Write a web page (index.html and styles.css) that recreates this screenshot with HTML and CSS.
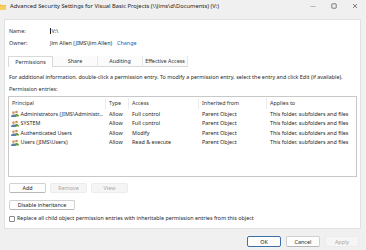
FILE: index.html
```html
<!DOCTYPE html>
<html lang="en">
<head>
    <meta charset="UTF-8">
    <meta name="viewport" content="width=device-width, initial-scale=1.0">
    <title>Advanced Security Settings</title>
    <link rel="stylesheet" href="styles.css">
</head>
<body>
    <div class="window">
        <header class="titlebar">
            <svg class="folder-icon" width="6" height="7" viewBox="4 0 6 7">
                <path d="M0 1h4l1 1h5v5H0z" fill="#e8b53a"/>
                <path d="M0 2.5h10V7H0z" fill="#f7cf5c"/>
            </svg>
            <span class="title">Advanced Security Settings for Visual Basic Projects (\\Jims\d\Documents) (V:)</span>
            <div class="controls">
                <svg width="6" height="6" viewBox="0 0 6 6"><path d="M0.5 3.5h5" stroke="#888" stroke-width="0.6"/></svg>
                <svg width="6" height="6" viewBox="0 0 6 6"><rect x="0.8" y="0.8" width="4.4" height="4.4" rx="0.6" fill="none" stroke="#333" stroke-width="0.6"/></svg>
                <svg width="6" height="6" viewBox="0 0 6 6"><path d="M1 1l4 4M5 1l-4 4" stroke="#333" stroke-width="0.6"/></svg>
            </div>
        </header>

        <main class="panel">
            <div class="info">
                <span class="label">Name:</span>
                <span class="value"><span class="caret"></span>V:\</span>
                <span class="label">Owner:</span>
                <span class="value">Jim Allen (JIMS\Jim Allen) <a class="link" href="#">Change</a></span>
            </div>

            <nav class="tabs">
                <span class="tab active">Permissions</span>
                <span class="tab">Share</span>
                <span class="tab">Auditing</span>
                <span class="tab">Effective Access</span>
            </nav>

            <section class="page">
                <p class="hint">For additional information, double-click a permission entry. To modify a permission entry, select the entry and click Edit (if available).</p>
                <p class="caption">Permission entries:</p>

                <div class="listbox">
                    <div class="list-row list-head">
                        <span>Principal</span>
                        <span>Type</span>
                        <span>Access</span>
                        <span>Inherited from</span>
                        <span>Applies to</span>
                    </div>
                    <div class="list-row">
                        <span class="principal"><svg class="user-icon" viewBox="0 0 16 14"><circle cx="11" cy="4" r="2.7" fill="#c9935e"/><path d="M6 13q0-5 5-5t5 5z" fill="#5f9a3a"/><circle cx="5" cy="5.5" r="2.8" fill="#d8a46c"/><path d="M0 14q0-5 5-5t5 5z" fill="#5b7fa8"/></svg>Administrators (JIMS\Administr...</span>
                        <span>Allow</span>
                        <span>Full control</span>
                        <span>Parent Object</span>
                        <span>This folder, subfolders and files</span>
                    </div>
                    <div class="list-row">
                        <span class="principal"><svg class="user-icon" viewBox="0 0 16 14"><circle cx="11" cy="4" r="2.7" fill="#c9935e"/><path d="M6 13q0-5 5-5t5 5z" fill="#5f9a3a"/><circle cx="5" cy="5.5" r="2.8" fill="#d8a46c"/><path d="M0 14q0-5 5-5t5 5z" fill="#5b7fa8"/></svg>SYSTEM</span>
                        <span>Allow</span>
                        <span>Full control</span>
                        <span>Parent Object</span>
                        <span>This folder, subfolders and files</span>
                    </div>
                    <div class="list-row">
                        <span class="principal"><svg class="user-icon" viewBox="0 0 16 14"><circle cx="11" cy="4" r="2.7" fill="#c9935e"/><path d="M6 13q0-5 5-5t5 5z" fill="#5f9a3a"/><circle cx="5" cy="5.5" r="2.8" fill="#d8a46c"/><path d="M0 14q0-5 5-5t5 5z" fill="#5b7fa8"/></svg>Authenticated Users</span>
                        <span>Allow</span>
                        <span>Modify</span>
                        <span>Parent Object</span>
                        <span>This folder, subfolders and files</span>
                    </div>
                    <div class="list-row">
                        <span class="principal"><svg class="user-icon" viewBox="0 0 16 14"><circle cx="11" cy="4" r="2.7" fill="#c9935e"/><path d="M6 13q0-5 5-5t5 5z" fill="#5f9a3a"/><circle cx="5" cy="5.5" r="2.8" fill="#d8a46c"/><path d="M0 14q0-5 5-5t5 5z" fill="#5b7fa8"/></svg>Users (JIMS\Users)</span>
                        <span>Allow</span>
                        <span>Read &amp; execute</span>
                        <span>Parent Object</span>
                        <span>This folder, subfolders and files</span>
                    </div>
                </div>

                <div class="btn-row">
                    <button class="btn">Add</button>
                    <button class="btn" disabled>Remove</button>
                    <button class="btn" disabled>View</button>
                </div>

                <button class="btn btn-wide">Disable inheritance</button>

                <label class="check">
                    <span class="box"></span>
                    Replace all child object permission entries with inheritable permission entries from this object
                </label>
            </section>
        </main>

        <footer class="footer">
            <button class="btn btn-default">OK</button>
            <button class="btn">Cancel</button>
            <button class="btn" disabled>Apply</button>
        </footer>
    </div>
</body>
</html>
```

FILE: styles.css
```css
* {
    margin: 0;
    padding: 0;
    box-sizing: border-box;
}

body {
    font-family: 'Noto Sans', 'Liberation Sans', sans-serif;
    font-size: 5.4px;
    color: #1f1f1f;
    background: #f0f0f0;
    width: 366px;
    height: 250px;
    overflow: hidden;
}

.window {
    display: flex;
    flex-direction: column;
    height: 250px;
}

.titlebar {
    height: 12px;
    display: flex;
    align-items: center;
    margin-bottom: 7px;
}

.folder-icon {
    flex-shrink: 0;
}

.title {
    margin-left: 4px;
    font-size: 5.8px;
    color: #222;
    white-space: nowrap;
}

.controls {
    margin-left: auto;
    display: flex;
    gap: 15px;
    padding-right: 8px;
}

.panel {
    margin: 0 5px 0 4px;
    height: 210px;
    background: #fff;
    border: 1px solid #e0e0e0;
    padding: 5px 3px 0;
}

.info {
    display: grid;
    grid-template-columns: 41px 1fr;
    grid-auto-rows: 12px;
    align-items: center;
    padding-left: 1px;
}

.label {
    color: #333;
}

.value {
    display: flex;
    align-items: center;
}

.caret {
    display: inline-block;
    width: 0.6px;
    height: 6px;
    background: #222;
    margin-right: 1px;
}

.link {
    color: #0067c0;
    text-decoration: none;
    margin-left: 5px;
}

.tabs {
    display: flex;
    margin-top: 7px;
    height: 11px;
}

.tab {
    width: 45px;
    display: flex;
    align-items: center;
    justify-content: center;
    color: #333;
    background: #fbfbfb;
    border-bottom: 1px solid #d9d9d9;
    border-right: 1px solid #e6e6e6;
}

.tab.active {
    background: #fff;
    border: 1px solid #d9d9d9;
    border-bottom: none;
}

.page {
    padding: 5px 0 0 1px;
}

.hint {
    line-height: 10px;
    white-space: nowrap;
}

.caption {
    line-height: 10px;
    margin-top: 2px;
    color: #333;
}

.listbox {
    margin-top: 2px;
    margin-left: -1px;
    width: 349px;
    height: 81px;
    border: 1px solid #c8c8c8;
}

.list-row {
    display: grid;
    grid-template-columns: 97px 23px 70px 68px 1fr;
    height: 9.5px;
    align-items: center;
    white-space: nowrap;
}

.list-row span {
    padding-left: 3px;
    overflow: hidden;
}

.list-head {
    height: 12px;
    color: #333;
}

.list-head span {
    border-right: 1px solid #ececec;
    line-height: 11px;
}

.list-head span:last-child {
    border-right: none;
}

.principal {
    display: flex;
    align-items: center;
}

.list-row .principal {
    padding-left: 2px;
}

.user-icon {
    width: 8px;
    height: 7px;
    margin-right: 1.5px;
    flex-shrink: 0;
}

.btn-row {
    display: flex;
    gap: 4px;
    margin-top: 6px;
}

.btn {
    font-family: inherit;
    font-size: 5.4px;
    color: #1f1f1f;
    background: #fdfdfd;
    border: 1px solid #d0d0d0;
    border-bottom-color: #b8b8b8;
    border-radius: 2px;
    height: 10px;
    width: 37px;
}

.btn:disabled {
    color: #a8a8a8;
    background: #f5f5f5;
    border-color: #ececec;
}

.btn-wide {
    width: 66px;
    margin-top: 7px;
    display: block;
}

.check {
    display: flex;
    align-items: center;
    gap: 2px;
    margin-top: 4px;
    line-height: 9px;
    white-space: nowrap;
}

.box {
    width: 6px;
    height: 6px;
    border: 1px solid #8a8a8a;
    border-radius: 1px;
    background: #fff;
}

.footer {
    display: flex;
    justify-content: flex-end;
    gap: 5px;
    padding: 7px 7px 0 0;
}

.footer .btn {
    width: 34px;
    height: 11px;
}

.btn-default {
    border-color: #3d6fa8;
}
```
